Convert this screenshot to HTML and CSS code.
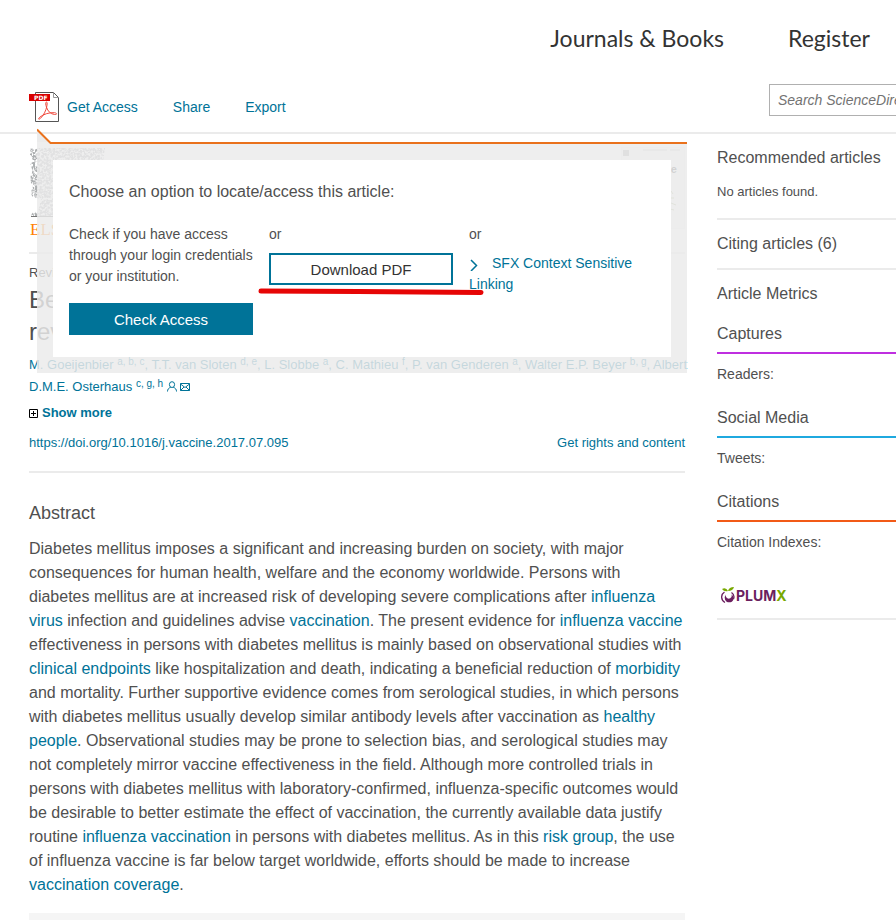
FILE: index.html
```html
<!DOCTYPE html>
<html lang="en">
<head>
<meta charset="utf-8">
<title>Abstract - Vaccine</title>
<link rel="stylesheet" href="styles.css">
</head>
<body>
<header class="site-header">
  <nav class="site-nav">
    <a href="#">Journals &amp; Books</a>
    <a href="#">Register</a>
  </nav>
</header>

<div class="toolbar">
  <div class="actions">
    <a class="pdf-link" href="#">
      <svg width="30" height="30" viewBox="0 0 30 30" aria-hidden="true">
        <path d="M6.500 .5H24.500L29.500 5.500V29.500H6.500Z" fill="#fff" stroke="#555"/>
        <path d="M24.500 .5V5.500H29.500" fill="none" stroke="#999"/>
        <path d="M17.500 10c-1.300 0-.8 3 0 5.200 1.300 4 4 6.800 8 7.300 3 .3 2.400-1.600 0-1.800-5-.4-11 1.400-14.500 4.300-2.200 1.800-1.500 3 .3 1.500 3-2.600 6-8 6.700-13.200.2-1.800.2-3.300-.5-3.300z" fill="none" stroke="#f0483c"/>
        <rect y="2" width="21" height="7" fill="#d90000"/>
        <text class="pdf-label" x="5" y="8">PDF</text>
      </svg>
      <span>Get Access</span>
    </a>
    <a href="#">Share</a>
    <a href="#">Export</a>
  </div>
  <form class="search">
    <input type="search" aria-label="Search ScienceDirect" placeholder="Search ScienceDirect">
  </form>

  <section class="popover" aria-label="Access options">
    <svg class="popover-tip" width="16" height="17" viewBox="0 0 16 17" aria-hidden="true">
      <path d="M0 2L12 14H0Z" fill="#ebebeb"/>
      <path d="M0 1.500L13.500 15H16" fill="none" stroke="#e9711c" stroke-width="2"/>
    </svg>
    <div class="popover-card">
      <p class="popover-title">Choose an option to locate/access this article:</p>
      <div class="options">
        <div class="option">
          <p>Check if you have access through your login credentials or your institution.</p>
          <button class="btn btn-primary" type="button">Check Access</button>
        </div>
        <div class="option">
          <p>or</p>
          <button class="btn btn-outline" type="button">Download PDF</button>
        </div>
        <div class="option">
          <p>or</p>
          <a class="sfx" href="#"><svg width="10" height="12" viewBox="0 0 10 12" aria-hidden="true"><path d="M2 1L7.500 6.500L2 12" fill="none" stroke="#007398" stroke-width="1.500"/></svg>SFX Context Sensitive Linking</a>
        </div>
      </div>
      <svg class="marker" width="228" height="8" viewBox="0 0 228 8" aria-hidden="true"><path d="M3 3L100 3.500L223 4.500" fill="none" stroke="#e60505" stroke-width="5" stroke-linecap="round"/></svg>
    </div>
  </section>
</div>

<div class="page">
  <main class="article">
    <div class="publication">
      <svg class="elsevier" width="76" height="90" viewBox="0 0 76 90" role="img" aria-label="Elsevier">
        <filter id="engraving" x="0" y="0" width="100%" height="100%">
          <feTurbulence type="fractalNoise" baseFrequency=".45" numOctaves="2" seed="4" result="n"/>
          <feColorMatrix in="n" values="0 0 0 0 .42  0 0 0 0 .43  0 0 0 0 .44  4 0 0 0 -1.400"/>
          <feComposite in2="SourceGraphic" operator="in"/>
        </filter>
        <path filter="url(#engraving)" d="M1 2Q3 0 5 3L10 1H76L74 14L70 30L56 40V66H76V70H2V68Q4 64 9 65L12 52L4 50Q0 46 4 40Q0 34 2 28Q5 22 1 18Q6 12 1 8Z"/>
        <path d="M2 69.500H76" stroke="#777"/>
        <text class="elsevier-name" x="1" y="88">ELSEVIER</text>
      </svg>
      <div class="cover">
        <svg width="64" height="82" viewBox="0 0 64 82" aria-hidden="true">
          <rect x=".5" y=".5" width="63" height="81" fill="#f8f8f8" stroke="#eee"/>
          <path d="M2 3h6v6h-6z" fill="#aaa"/>
          <path d="M22 3h24M49 3h10" stroke="#bbb"/>
          <path d="M50 44l2 3M49 51h4M50 56l5 2M49 62l4 1" stroke="#a9b68c"/>
        </svg>
        <span class="cover-name">Vaccine</span>
      </div>
    </div>

    <div class="kind">Review</div>
    <h1>Benefits of influenza vaccination in patients with diabetes:<br>review</h1>

    <p class="authors"><a href="#">M. Goeijenbier <sup>a, b, c</sup></a>, <a href="#">T.T. van Sloten <sup>d, e</sup></a>, <a href="#">L. Slobbe <sup>a</sup></a>, <a href="#">C. Mathieu <sup>f</sup></a>, <a href="#">P. van Genderen <sup>a</sup></a>, <a href="#">Walter E.P. Beyer <sup>b, g</sup></a>, <a href="#">Albert D.M.E. Osterhaus <sup>c, g, h</sup>
      <svg width="10" height="11" viewBox="0 0 10 11" aria-hidden="true"><path d="M5 .7a2.600 2.900 0 1 1 0 5.800a2.600 2.900 0 1 1 0-5.800M.5 10.500c0-2 1-3.500 3.200-4.200M9.500 10.500c0-2-1-3.500-3.200-4.200" fill="none" stroke="#007398"/></svg>
      <svg width="10" height="10" viewBox="0 0 10 10" aria-hidden="true"><path d="M.5 1.500H9.500V8.500H.5ZM.5 2L5 5.500L9.500 2M.5 8.500L4 5M9.500 8.500L6 5" fill="none" stroke="#007398"/></svg></a></p>

    <a class="show-more" href="#"><svg width="9" height="9" viewBox="0 0 9 9" aria-hidden="true"><path d="M.5.5H8.500V8.500H.5ZM2 4.500H7M4.500 2V7" fill="none" stroke="#000"/></svg>Show more</a>

    <div class="doi-row">
      <a href="#">https://doi.org/10.1016/j.vaccine.2017.07.095</a>
      <a href="#">Get rights and content</a>
    </div>

    <section class="abstract">
      <h2>Abstract</h2>
      <p>Diabetes mellitus imposes a significant and increasing burden on society, with major consequences for human health, welfare and the economy worldwide. Persons with diabetes mellitus are at increased risk of developing severe complications after <a href="#">influenza virus</a> infection and guidelines advise <a href="#">vaccination</a>. The present evidence for <a href="#">influenza vaccine</a> effectiveness in persons with diabetes mellitus is mainly based on observational studies with <a href="#">clinical endpoints</a> like hospitalization and death, indicating a beneficial reduction of <a href="#">morbidity</a> and mortality. Further supportive evidence comes from serological studies, in which persons with diabetes mellitus usually develop similar antibody levels after vaccination as <a href="#">healthy people</a>. Observational studies may be prone to selection bias, and serological studies may not completely mirror vaccine effectiveness in the field. Although more controlled trials in persons with diabetes mellitus with laboratory-confirmed, influenza-specific outcomes would be desirable to better estimate the effect of vaccination, the currently available data justify routine <a href="#">influenza vaccination</a> in persons with diabetes mellitus. As in this <a href="#">risk group</a>, the use of influenza vaccine is far below target worldwide, efforts should be made to increase <a href="#">vaccination coverage</a>.</p>
    </section>
    <div class="next-bar"></div>
  </main>

  <aside class="sidebar">
    <section class="panel">
      <h2>Recommended articles</h2>
      <p class="note">No articles found.</p>
    </section>
    <section class="panel">
      <h2>Citing articles (6)</h2>
    </section>
    <section class="panel metrics">
      <h2>Article Metrics</h2>
      <h3 class="captures">Captures</h3>
      <p>Readers:</p>
      <h3 class="social">Social Media</h3>
      <p>Tweets:</p>
      <h3 class="citations">Citations</h3>
      <p>Citation Indexes:</p>
      <a class="plumx" href="#">
        <svg width="14" height="17" viewBox="0 0 14 17" aria-hidden="true">
          <path d="M3.500 5A6 6 0 0 0 4 15.500M10.500 5.500A5.500 5.500 0 0 1 12.500 12" fill="none" stroke="#6b1f5f" stroke-width="1.300"/>
          <path d="M5 7.500a3 3 0 1 0 5.500 0a5 5 0 0 1 2 5a4.600 4.600 0 0 1-8.500 0a5 5 0 0 1 1-5Z" fill="#6b1f5f"/>
          <path d="M1 2Q5 0 7 4Q3 5 1 2ZM7 4Q8 0 13 0Q12 4 7 4Z" fill="#78a800"/>
        </svg>
        <span>PLUM<span class="plumx-x">X</span></span>
      </a>
    </section>
  </aside>
</div>
</body>
</html>
```

FILE: styles.css
```css
* { box-sizing: border-box; }

body {
  margin: 0;
  background: #fff;
  color: #505050;
  font-family: "Liberation Sans", Arial, sans-serif;
  font-size: 14px;
}

h1, h2, h3, p { margin: 0; font-weight: 400; }
a { color: #007398; text-decoration: none; }

.site-header { padding: 20px 26px 20px 28px; }
.site-nav { display: flex; justify-content: flex-end; gap: 64px; }
.site-nav a {
  color: #333;
  font-family: Lato, sans-serif;
  font-size: 23px;
  line-height: 36px;
}

.toolbar {
  position: relative;
  display: flex;
  justify-content: space-between;
  align-items: center;
  height: 58px;
  padding-left: 29px;
  border-bottom: 2px solid #ebebeb;
}
.actions { display: flex; align-items: center; gap: 35px; padding-top: 6px; }
.pdf-link { display: flex; align-items: center; gap: 8px; }
.pdf-label { fill: #fff; font: bold 6px "DejaVu Sans", sans-serif; }

.search { width: 127px; flex: none; margin-bottom: 8px; overflow: hidden; }
.search input {
  display: block;
  width: 290px;
  height: 32px;
  padding: 0 8px;
  border: 1px solid #b0b0b0;
  border-radius: 0;
  background: #fff;
  font: italic 14px "Liberation Sans", Arial, sans-serif;
}
.search input::placeholder { color: #737373; opacity: 1; }

.popover {
  position: absolute;
  z-index: 2;
  top: 66px;
  left: 37px;
  width: 650px;
  padding: 16px;
  border-top: 2px solid transparent;
  background: linear-gradient(#e9711c, #e9711c) 14px 0 / 100% 2px no-repeat border-box, rgba(235, 235, 235, .84) border-box;
}
.popover-tip { position: absolute; top: -16px; left: 0; }
.popover-card {
  position: relative;
  padding: 22px 16px;
  background: #fff;
}
.popover-title { font-size: 16px; line-height: 20px; }
.options {
  display: grid;
  grid-template-columns: repeat(3, 184px);
  gap: 16px;
  margin-top: 22px;
}
.option { line-height: 21px; }
.btn {
  display: block;
  width: 100%;
  height: 32px;
  margin-top: 16px;
  border: 2px solid #007398;
  font: 15px "Liberation Sans", Arial, sans-serif;
}
.btn-primary { background: #007398; color: #fff; }
.btn-outline { margin-top: 8px; background: #fff; color: #333; }
.sfx { display: block; margin-top: 8px; }
.sfx svg { margin-right: 13px; vertical-align: -3px; }
.marker { position: absolute; top: 128px; left: 205px; }

.page {
  display: grid;
  grid-template-columns: minmax(0, 656px) minmax(0, 1fr);
  gap: 32px;
  padding-left: 29px;
}

.publication {
  display: flex;
  justify-content: space-between;
  height: 120px;
  padding-top: 13px;
  border-bottom: 2px solid #ebebeb;
}
.elsevier { overflow: visible; }
.elsevier-name { fill: #ff8200; font: 17px "Liberation Serif", serif; }
.cover { position: relative; }
.cover-name {
  position: absolute;
  top: 16px;
  right: 8px;
  font-size: 11px;
  font-weight: 700;
}
.kind { margin-top: 10px; font-size: 13px; line-height: 17px; }
h1 { margin-top: 3px; font-size: 24px; line-height: 32px; }
.authors { margin: 6px -4px 0 0; font-size: 13px; line-height: 22px; color: #007398; }
.authors sup { font-size: 10px; line-height: 0; vertical-align: 4px; }
.authors svg { vertical-align: -1px; }
.show-more {
  display: flex;
  align-items: center;
  gap: 4px;
  margin-top: 5px;
  font-size: 13px;
  font-weight: 700;
  line-height: 20px;
}
.doi-row {
  display: flex;
  justify-content: space-between;
  margin-top: 10px;
  padding-bottom: 18px;
  border-bottom: 2px solid #ebebeb;
  font-size: 13px;
  line-height: 20px;
}
.abstract { margin-top: 28px; }
.abstract h2 { font-size: 18px; line-height: 24px; }
.abstract p { margin-top: 12px; font-size: 16px; line-height: 24px; }
.next-bar { height: 40px; margin-top: 16px; background: #f5f5f5; }

.sidebar { padding-top: 14px; }
.panel { padding-bottom: 14px; border-bottom: 2px solid #ebebeb; }
.panel + .panel { padding-top: 14px; }
.panel h2, .panel h3 { font-size: 16px; line-height: 20px; white-space: nowrap; }
.panel .note { margin-top: 15px; padding-bottom: 4px; font-size: 13px; line-height: 17px; }
.metrics h3 { margin-top: 25px; padding-bottom: 8px; border-bottom: 2px solid; }
.metrics h2 + h3 { margin-top: 20px; }
.metrics h3.captures { border-color: #bf2fe0; }
.metrics h3.social { border-color: #1fa9df; }
.metrics h3.citations { border-color: #f25a17; }
.metrics p { margin-top: 12px; line-height: 17px; }
.plumx {
  display: flex;
  align-items: center;
  gap: 1px;
  margin: 36px 0 0 4px;
  color: #6b1f5f;
  font: 700 14px/17px Inter, sans-serif;
}
.plumx-x { color: #78a800; }
```
